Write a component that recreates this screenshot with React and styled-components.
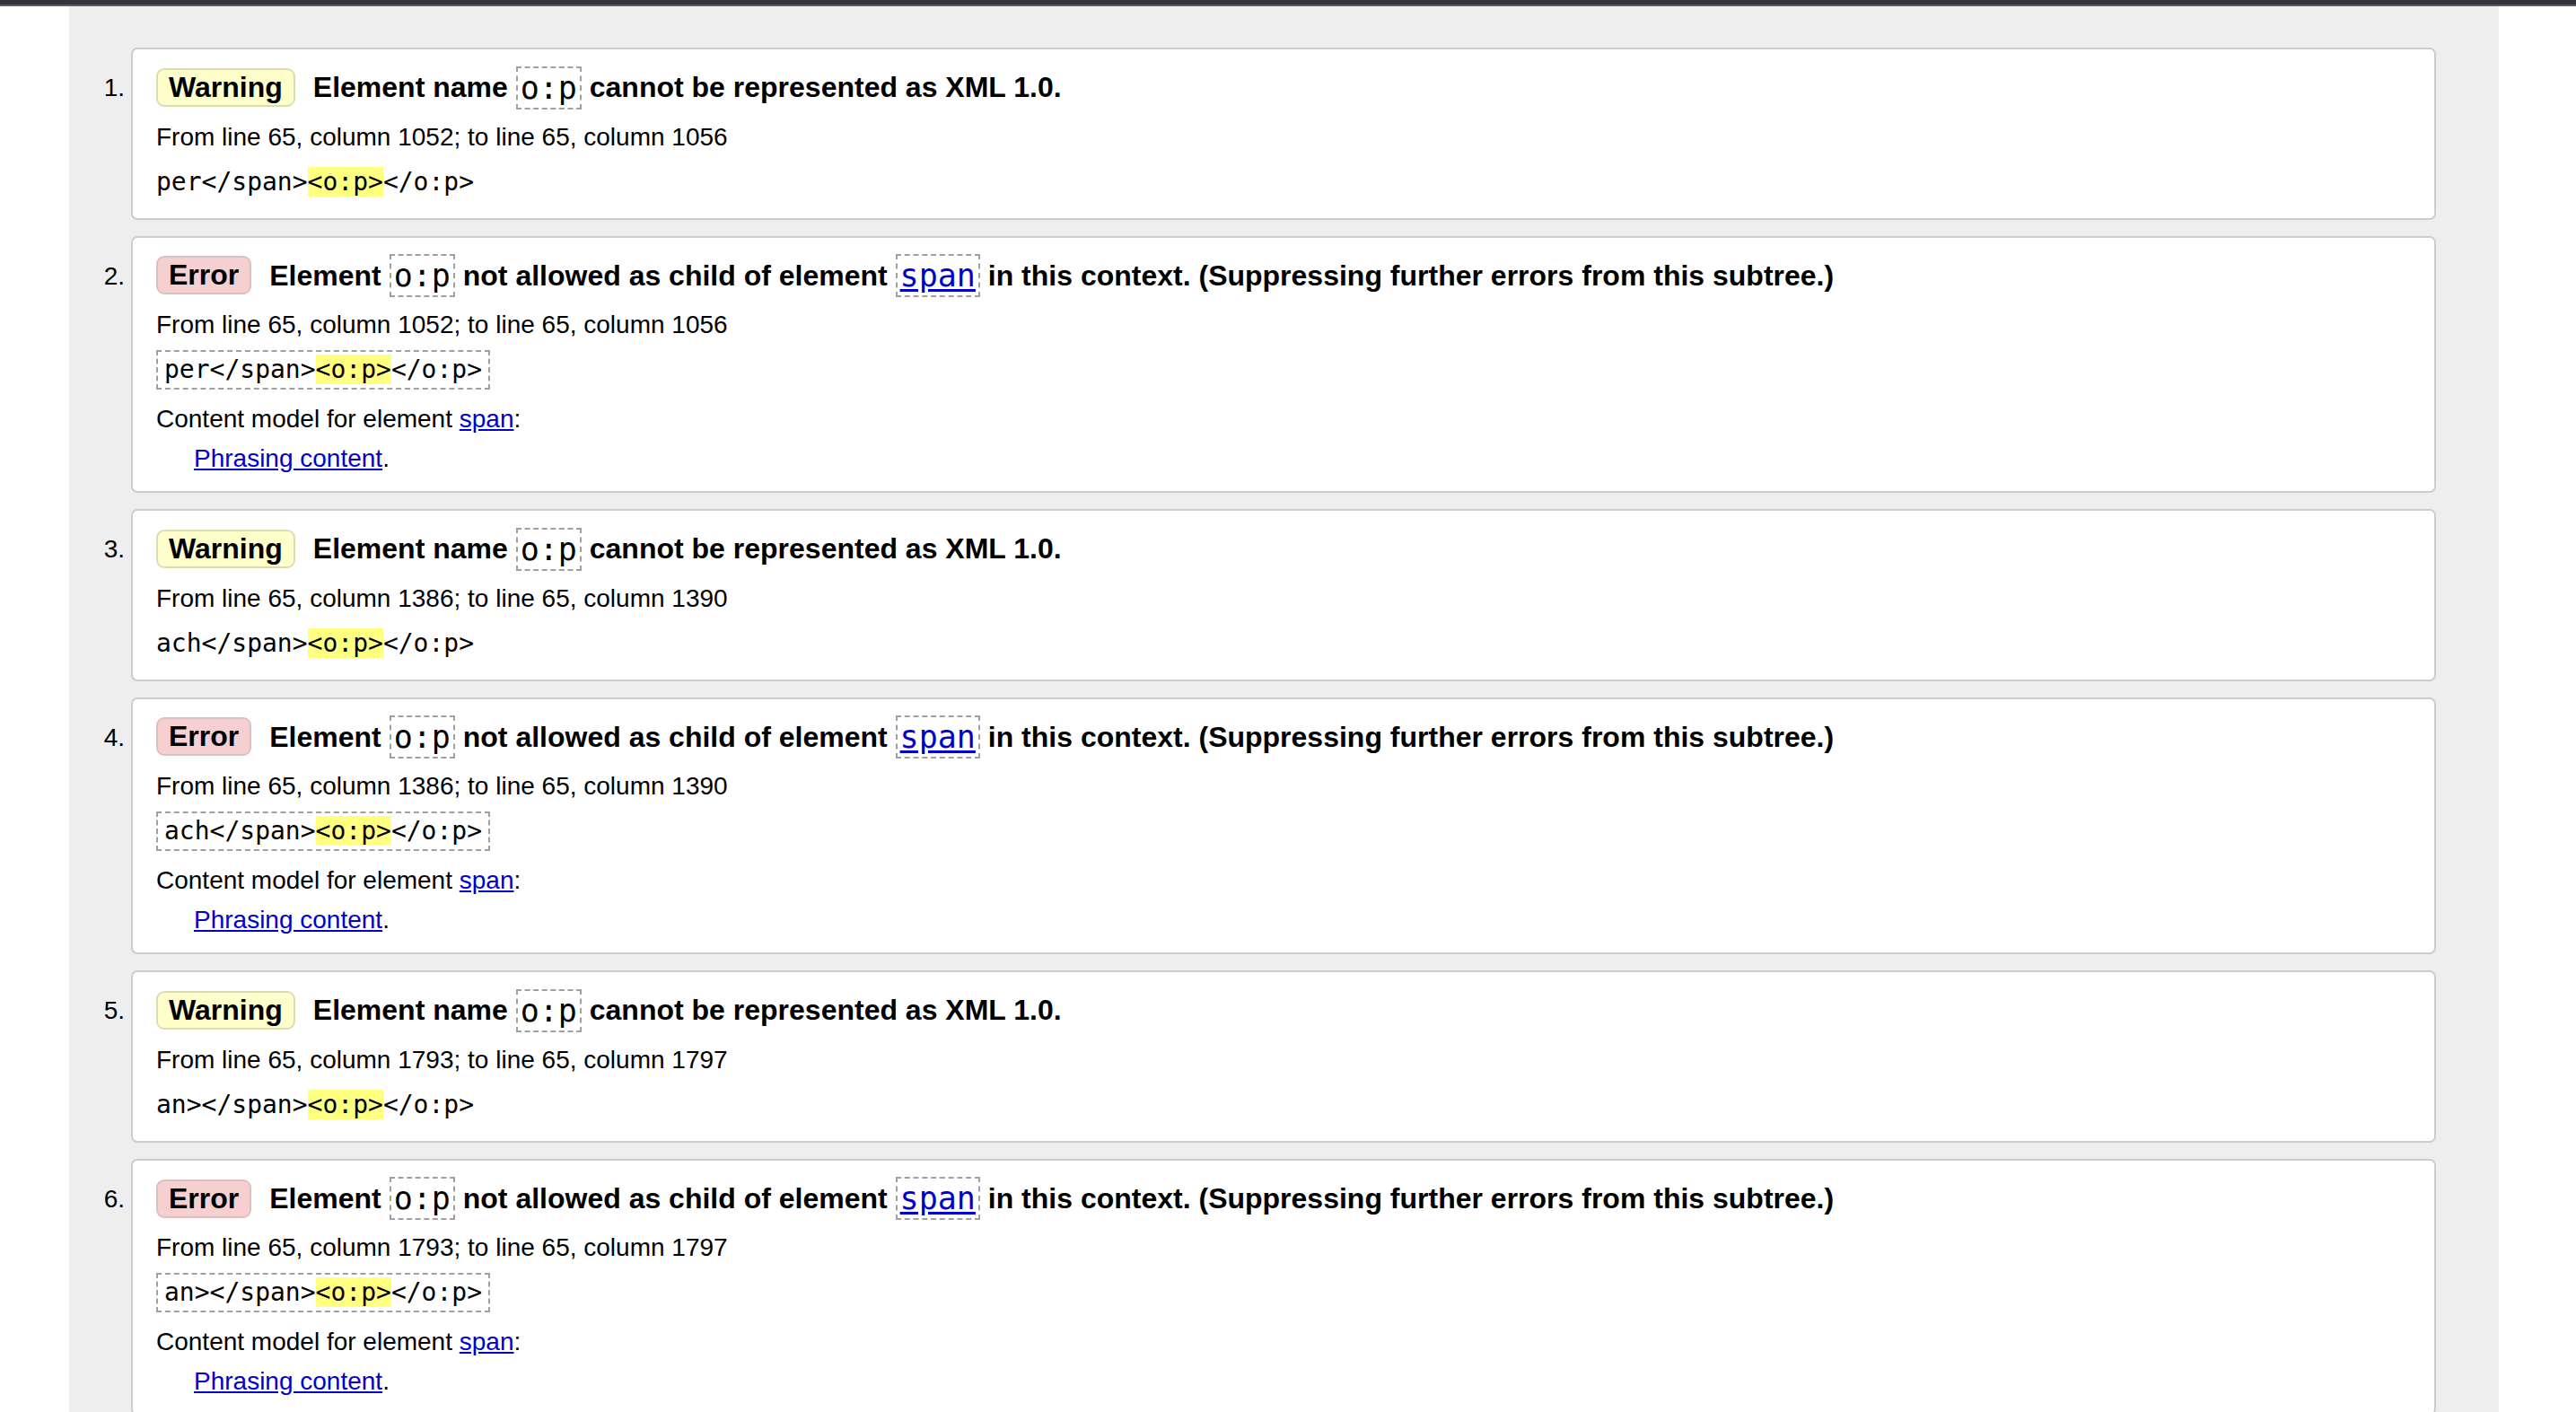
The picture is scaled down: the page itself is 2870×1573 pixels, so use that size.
import styled, { createGlobalStyle } from 'styled-components';

const GlobalStyle = createGlobalStyle`
  html, body {
    margin: 0;
    padding: 0;
    background: #ffffff;
  }
  body {
    font-family: 'Liberation Sans', Arial, Helvetica, sans-serif;
    color: #000;
  }
`

const messages = [
  { type: 'warning', from: 1052, to: 1056, lead: 'per' },
  { type: 'error', from: 1052, to: 1056, lead: 'per' },
  { type: 'warning', from: 1386, to: 1390, lead: 'ach' },
  { type: 'error', from: 1386, to: 1390, lead: 'ach' },
  { type: 'warning', from: 1793, to: 1797, lead: 'an>' },
  { type: 'error', from: 1793, to: 1797, lead: 'an>' },
]

function Message({ index, msg }) {
  const isError = msg.type === 'error'
  return (
    <Item>
      <Number>{index}.</Number>
      <Card>
        <Title>
          <Badge variant={msg.type}>{isError ? 'Error' : 'Warning'}</Badge>
          {isError ? (
            <span>
              Element <InlineCode>o:p</InlineCode> not allowed as child of element{' '}
              <InlineCode><CodeLink href="#">span</CodeLink></InlineCode> in this context. (Suppressing further errors from this subtree.)
            </span>
          ) : (
            <span>
              Element name <InlineCode>o:p</InlineCode> cannot be represented as XML 1.0.
            </span>
          )}
        </Title>
        <Location>
          From line 65, column {msg.from}; to line 65, column {msg.to}
        </Location>
        <ExtractRow>
          <Extract boxed={isError}>
            {msg.lead}&lt;/span&gt;<Mark>&lt;o:p&gt;</Mark>&lt;/o:p&gt;
          </Extract>
        </ExtractRow>
        {isError && (
          <>
            <ModelLine>
              Content model for element <Link href="#">span</Link>:
            </ModelLine>
            <ModelDetail>
              <Link href="#">Phrasing content</Link>.
            </ModelDetail>
          </>
        )}
      </Card>
    </Item>
  )
}

function App() {
  return (
    <Page>
      <GlobalStyle />
      <TopBar />
      <Panel>
        <List>
          {messages.map((m, i) => (
            <Message key={i} index={i + 1} msg={m} />
          ))}
        </List>
      </Panel>
    </Page>
  );
}

export default App;

const Page = styled.div`
  height: 100vh;
  overflow: hidden;
  display: flex;
  flex-direction: column;
`
const TopBar = styled.div`
  height: 5px;
  flex-shrink: 0;
  background: #333639;
  border-bottom: 2px solid #5c5c5e;
`
const Panel = styled.main`
  flex: 1;
  margin-left: 77px;
  width: 2707px;
  background: #eeeeee;
  padding: 46px 70px 0 0;
  box-sizing: border-box;
`
const List = styled.ol`
  list-style: none;
  margin: 0;
  padding: 0;
  display: flex;
  flex-direction: column;
  gap: 18px;
`
const Item = styled.li`
  display: flex;
  align-items: flex-start;
`
const Number = styled.div`
  width: 62px;
  padding-right: 7px;
  margin-top: 21px;
  text-align: right;
  font-size: 28px;
  line-height: 48px;
`
const Card = styled.div`
  flex: 1;
  background: #ffffff;
  border: 2px solid #cccccc;
  border-radius: 7px;
  padding: 18px 26px 18px 26px;
  display: flex;
  flex-direction: column;
`
const Title = styled.p`
  margin: 0;
  display: flex;
  align-items: center;
  gap: 20px;
  min-height: 48px;
  font-size: 32px;
  font-weight: bold;
  line-height: 48px;
  white-space: nowrap;
`
const Badge = styled.span`
  display: inline-block;
  box-sizing: border-box;
  height: 43px;
  line-height: 39px;
  padding: 0 12px;
  border-radius: 9px;
  border: 2px solid ${(props) => (props.variant === 'error' ? '#dcc0c0' : '#dcdcb4')};
  background: ${(props) => (props.variant === 'error' ? '#f6d0d0' : '#ffffcc')};
`
const InlineCode = styled.code`
  display: inline-block;
  vertical-align: middle;
  box-sizing: border-box;
  height: 48px;
  line-height: 44px;
  padding: 0 3px;
  margin-top: -4px;
  border: 2px dashed #a0a0a0;
  font-family: 'DejaVu Sans Mono', 'Liberation Mono', monospace;
  font-weight: normal;
  font-size: 35px;
`
const CodeLink = styled.a`
  color: #0000cc;
  text-decoration: underline;
  text-underline-offset: 3px;
`
const Location = styled.p`
  margin: 13px 0 0 0;
  font-size: 28px;
  line-height: 36px;
`
const ExtractRow = styled.p`
  margin: 10px 0 0 0;
  display: flex;
`
const Extract = styled.code`
  box-sizing: border-box;
  height: 44px;
  line-height: ${(props) => (props.boxed ? '40px' : '44px')};
  padding: ${(props) => (props.boxed ? '0 7px' : '0')};
  border: ${(props) => (props.boxed ? '2px dashed #a0a0a0' : 'none')};
  font-family: 'DejaVu Sans Mono', 'Liberation Mono', monospace;
  font-size: 28px;
  white-space: pre;
`
const Mark = styled.b`
  font-weight: normal;
  background: #ffff80;
`
const ModelLine = styled.p`
  margin: 15px 0 0 0;
  font-size: 28px;
  line-height: 36px;
`
const ModelDetail = styled.p`
  margin: 8px 0 0 42px;
  font-size: 28px;
  line-height: 36px;
`
const Link = styled.a`
  color: #0000cc;
  text-decoration: underline;
`
